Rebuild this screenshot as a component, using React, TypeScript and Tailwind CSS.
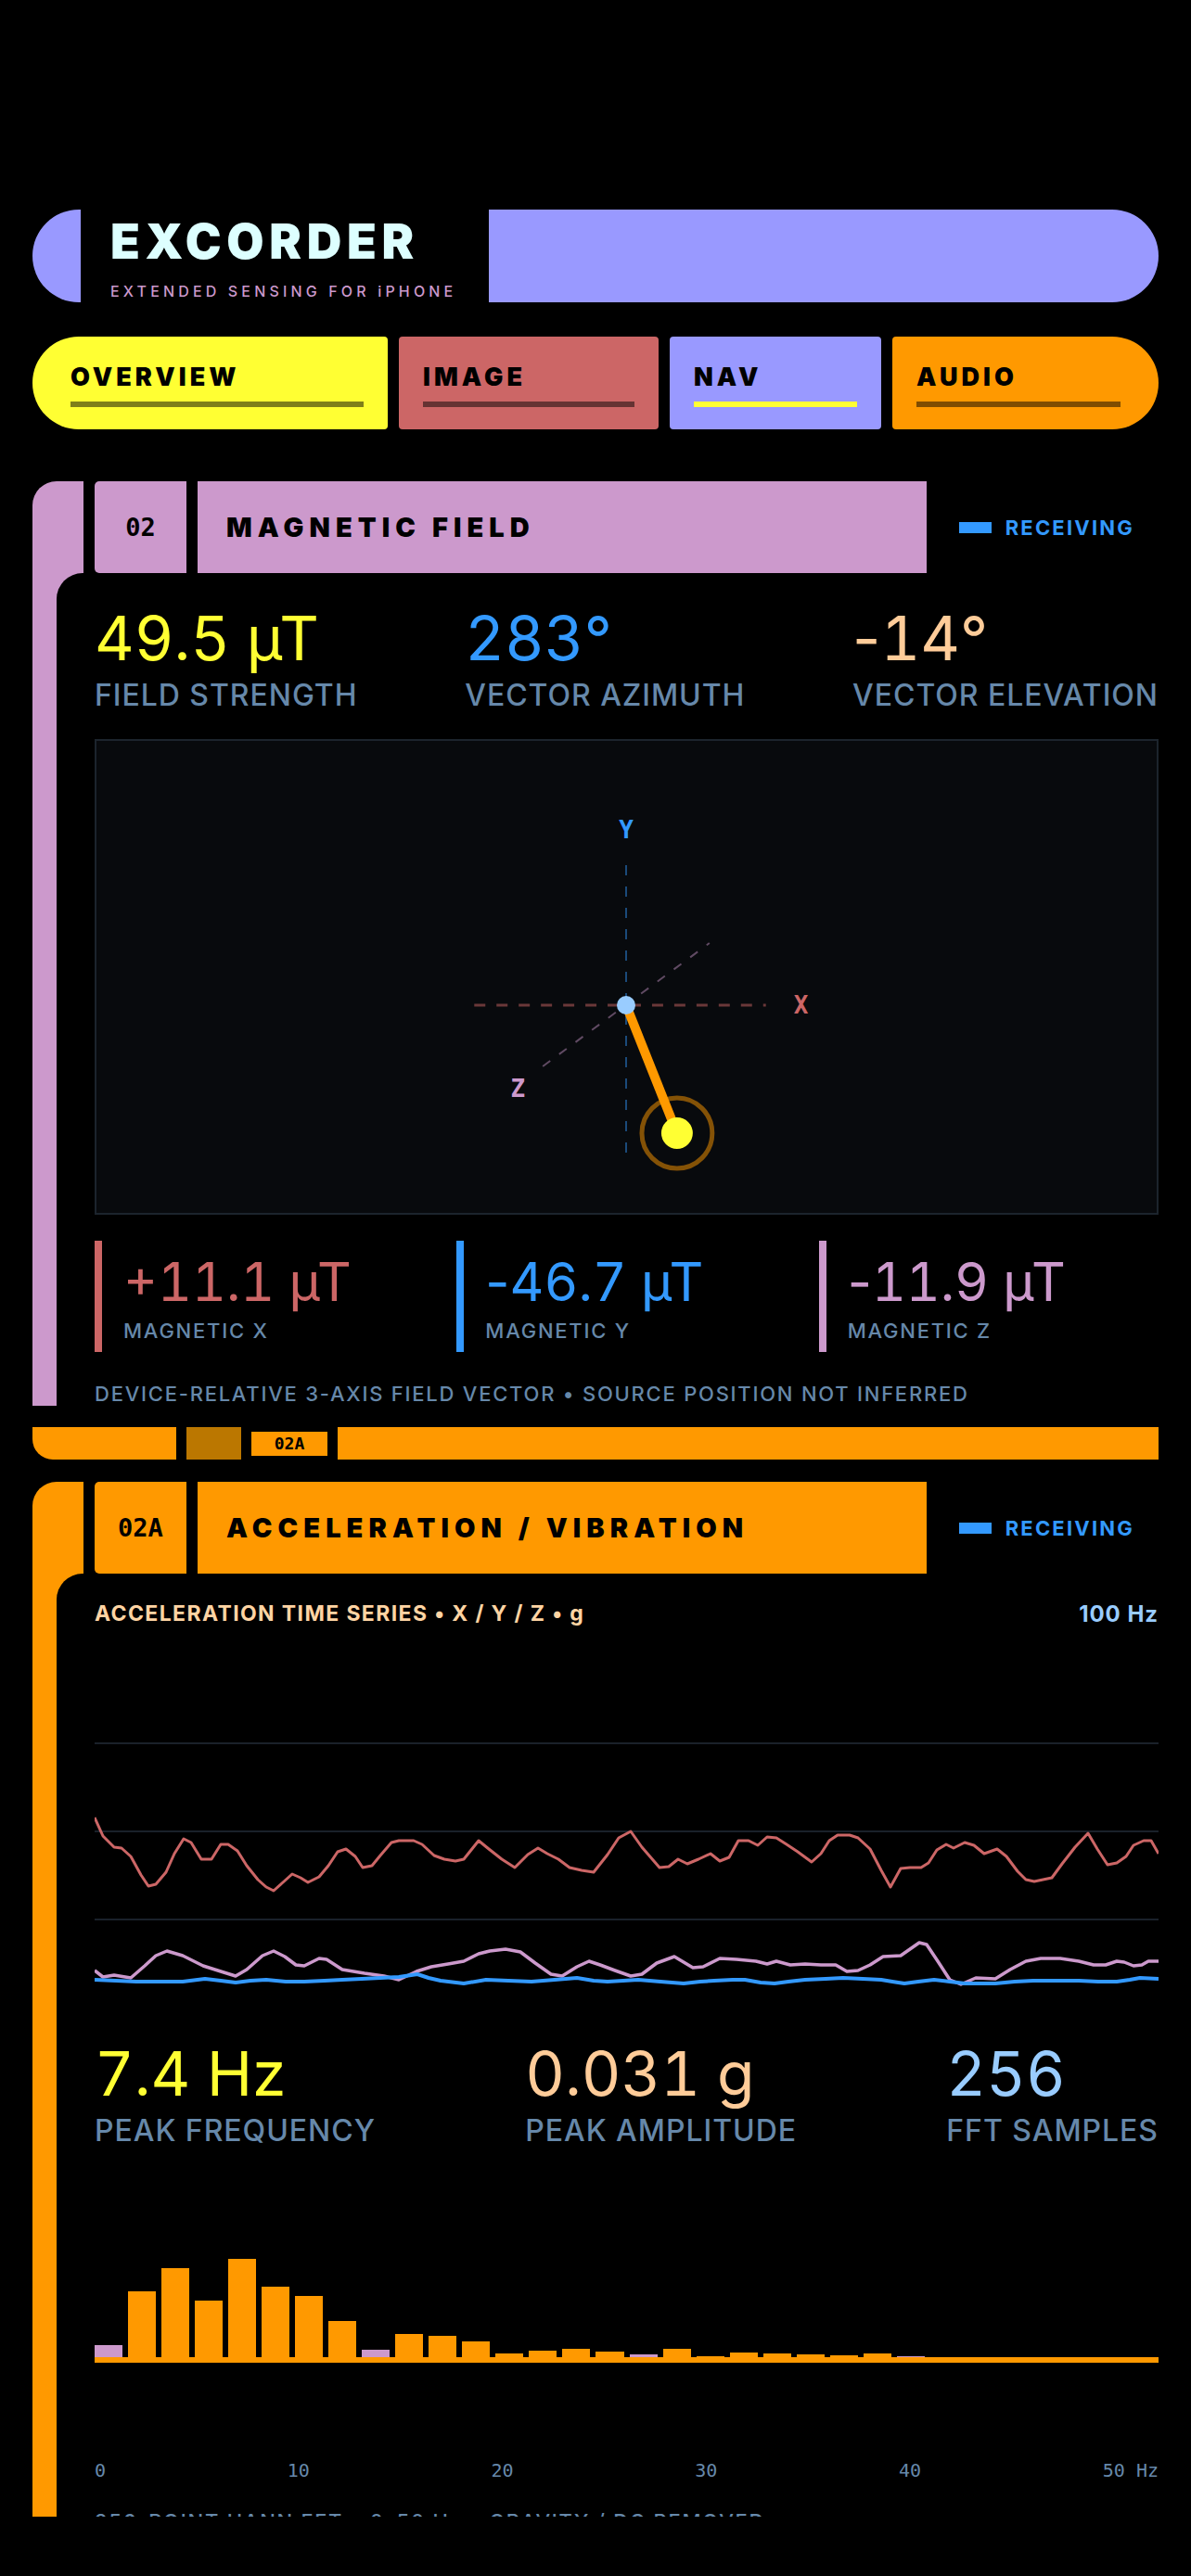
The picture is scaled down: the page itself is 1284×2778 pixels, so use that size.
import React from "react";

const RED =
  "102,1958 111,1978 123,1990 131,1991 141,2000 152,2020 160,2032 168,2030 179,2017 188,1997 198,1981 206,1985 217,2003 228,2003 238,1987 246,1987 256,1994 266,2010 278,2025 287,2033 295,2037 305,2028 315,2019 324,2023 332,2028 344,2022 354,2010 364,1995 373,1992 383,2000 391,2012 401,2010 410,1999 422,1985 430,1983 446,1983 455,1987 468,1999 479,2003 491,2005 500,2003 516,1983 527,1992 541,2003 555,2012 569,1998 580,1991 590,1997 602,2003 614,2012 627,2015 640,2017 655,1998 667,1980 680,1973 692,1990 711,2012 721,2011 731,2003 741,2008 753,2003 766,1997 776,2005 786,2001 796,1983 807,1983 817,1988 827,1979 837,1980 848,1987 860,1995 875,2006 885,1997 894,1983 903,1977 916,1977 925,1980 938,1992 950,2015 960,2033 971,2013 981,2012 993,2012 1001,2007 1010,1993 1020,1987 1028,1991 1040,1985 1050,1988 1061,1997 1075,1992 1085,2000 1097,2016 1106,2025 1115,2027 1134,2023 1145,2008 1159,1990 1173,1975 1183,1992 1194,2009 1204,2007 1214,2000 1222,1988 1233,1983 1241,1983 1249,1997";

const PINK =
  "102,2123 111,2130 123,2128 141,2131 156,2118 168,2107 180,2102 197,2107 219,2118 238,2124 254,2129 266,2122 283,2107 295,2102 307,2108 319,2117 328,2118 344,2110 352,2111 369,2122 393,2126 414,2129 430,2133 449,2124 465,2119 483,2116 500,2113 516,2105 528,2102 545,2100 561,2103 577,2115 594,2127 606,2129 622,2119 635,2113 647,2117 663,2123 680,2129 692,2127 708,2115 727,2108 747,2120 758,2119 776,2110 794,2111 815,2113 827,2116 837,2113 852,2117 868,2116 885,2117 901,2117 913,2124 925,2123 938,2117 952,2108 971,2107 991,2093 999,2095 1011,2113 1024,2133 1036,2138 1052,2131 1073,2132 1089,2122 1106,2113 1122,2110 1143,2110 1163,2113 1179,2117 1192,2117 1204,2113 1212,2114 1222,2118 1231,2117 1238,2113 1249,2113";

const BLUE =
  "102,2133 125,2134 147,2135 172,2135 197,2135 221,2132 238,2134 254,2136 270,2134 287,2133 308,2135 328,2135 350,2134 369,2133 390,2132 410,2131 430,2130 450,2127 462,2131 475,2134 500,2137 524,2133 548,2134 573,2135 598,2133 622,2131 640,2134 655,2135 672,2134 688,2133 712,2135 737,2137 755,2135 770,2134 790,2133 803,2133 820,2136 835,2137 850,2135 868,2133 890,2132 909,2131 930,2132 950,2133 962,2135 975,2137 990,2135 1007,2133 1024,2135 1040,2137 1056,2137 1073,2137 1094,2135 1114,2134 1140,2134 1163,2134 1184,2135 1204,2135 1218,2133 1229,2131 1249,2132";

const FFT = [13, 71, 96, 61, 106, 76, 66, 39, 8, 25, 23, 17, 4, 7, 9, 6, 3, 9, 1, 5, 4, 3, 2, 4, 1, 0, 0, 0, 0, 0, 0, 0];

// keeps the minus sign narrow while digits stay tabular
function Num({ value }: { value: string }) {
  if (value.startsWith("-")) {
    return (
      <>
        <span className="normal-nums">-</span>
        {value.slice(1)}
      </>
    );
  }
  return <>{value}</>;
}

function Stat({ value, label, color }: { value: string; label: string; color: string }) {
  return (
    <div className="flex flex-col">
      <span className={`text-[66px] font-normal leading-none tabular-nums ${color}`}>
        <Num value={value} />
      </span>
      <span className="mt-[13px] text-[32px] font-medium leading-none tracking-[0.03em] text-[#6688aa]">{label}</span>
    </div>
  );
}

function Axis({ value, label, text, border }: { value: string; label: string; text: string; border: string }) {
  return (
    <div className={`flex flex-col border-l-[8px] pl-[23px] pt-[16px] pb-[12px] ${border}`}>
      <span className={`text-[57px] font-normal leading-none tabular-nums ${text}`}>
        <Num value={value} />
      </span>
      <span className="mt-[13px] text-[22px] font-medium leading-none tracking-[0.08em] text-[#6688aa]">{label}</span>
    </div>
  );
}

function Section({ id, title, bg, children }: { id: string; title: string; bg: string; children: React.ReactNode }) {
  return (
    <section className="flex flex-col">
      <div className="flex h-[99px]">
        <div className={`w-[55px] rounded-tl-[26px] ${bg}`} />
        <div className={`ml-[12px] flex w-[99px] items-center justify-center rounded-l-[5px] ${bg}`}>
          <span className="font-['DejaVu_Sans_Mono',monospace] text-[27px] font-bold leading-none text-black">{id}</span>
        </div>
        <div className={`ml-[12px] flex w-[786px] items-center pl-[31px] ${bg}`}>
          <span className="text-[29px] font-black leading-none tracking-[0.21em] text-black">{title}</span>
        </div>
        <div className="flex flex-1 items-center justify-end gap-[15px] pr-[26px]">
          <span className="h-[12px] w-[35px] bg-[#3399ff]" />
          <span className="text-[22px] font-bold leading-none tracking-[0.1em] text-[#3399ff]">RECEIVING</span>
        </div>
      </div>
      <div className={bg}>
        <div className="ml-[26px] rounded-tl-[28px] bg-black pl-[41px]">{children}</div>
      </div>
    </section>
  );
}

function FieldDiagram() {
  return (
    <div className="mt-[31px] h-[513px] border-2 border-[#1c242d] bg-[#080a0d]">
      <svg viewBox="104 799 1145 509" preserveAspectRatio="none" className="h-full w-full">
        <line x1="676" y1="933" x2="676" y2="1248" stroke="#3399ff" strokeOpacity="0.45" strokeWidth="2" strokeDasharray="11 12" />
        <line x1="512" y1="1084" x2="827" y2="1084" stroke="#cc6666" strokeOpacity="0.5" strokeWidth="3" strokeDasharray="12 12" />
        <line x1="586" y1="1150" x2="766" y2="1017" stroke="#cc99cc" strokeOpacity="0.45" strokeWidth="2" strokeDasharray="10 12" />
        <text x="676" y="904" textAnchor="middle" fill="#3399ff" fontSize="26" fontWeight="600" fontFamily="DejaVu Sans Mono, monospace">Y</text>
        <text x="865" y="1093" textAnchor="middle" fill="#cc6666" fontSize="26" fontWeight="600" fontFamily="DejaVu Sans Mono, monospace">X</text>
        <text x="559" y="1183" textAnchor="middle" fill="#cc99cc" fontSize="26" fontWeight="600" fontFamily="DejaVu Sans Mono, monospace">Z</text>
        <circle cx="731" cy="1222" r="38" fill="none" stroke="#ff9900" strokeOpacity="0.5" strokeWidth="5" />
        <line x1="676" y1="1084" x2="731" y2="1222" stroke="#ff9900" strokeWidth="10" />
        <circle cx="731" cy="1222" r="17" fill="#ffff33" />
        <circle cx="676" cy="1084" r="10" fill="#99ccff" />
      </svg>
    </div>
  );
}

function TimeSeries() {
  return (
    <div className="mt-[32px] h-[380px]">
      <svg viewBox="102 1783 1147 380" preserveAspectRatio="none" className="h-full w-full">
        <line x1="102" y1="1878" x2="1249" y2="1878" stroke="#1a212a" strokeWidth="2" />
        <line x1="102" y1="1973" x2="1249" y2="1973" stroke="#1a212a" strokeWidth="2" />
        <line x1="102" y1="2068" x2="1249" y2="2068" stroke="#1a212a" strokeWidth="2" />
        <polyline points={RED} fill="none" stroke="#cc6666" strokeWidth="3" strokeLinejoin="round" />
        <polyline points={PINK} fill="none" stroke="#cc99cc" strokeWidth="3.5" strokeLinejoin="round" />
        <polyline points={BLUE} fill="none" stroke="#3399ff" strokeWidth="4" strokeLinejoin="round" />
      </svg>
    </div>
  );
}

export default function App() {
  return (
    <div className="h-[2778px] w-full bg-black font-['Inter',sans-serif]">
      <main className="h-[2714px] overflow-hidden px-[35px] pt-[226px]">
        {/* Title bar */}
        <header className="flex h-[100px]">
          <div className="w-[52px] rounded-l-full bg-[#9999ff]" />
          <div className="flex w-[440px] flex-col pl-[32px] pt-[9px]">
            <span className="text-[52px] font-black leading-none tracking-[0.11em] text-[#ddffff]">EXCORDER</span>
            <span className="mt-[19px] text-[16px] font-medium leading-none tracking-[0.26em] text-[#cc99cc]">EXTENDED SENSING FOR iPHONE</span>
          </div>
          <div className="flex-1 rounded-r-full bg-[#9999ff]" />
        </header>

        {/* Tabs */}
        <nav className="mt-[37px] flex h-[100px] gap-[12px]">
          <div className="flex w-[383px] flex-col rounded-l-[50px] rounded-r-[4px] bg-[#ffff33] pl-[41px] pr-[26px] pt-[30px]">
            <span className="text-[27px] font-black leading-none tracking-[0.15em] text-black">OVERVIEW</span>
            <span className="mt-[13px] h-[6px] bg-black/50" />
          </div>
          <div className="flex w-[280px] flex-col rounded-[4px] bg-[#cc6666] px-[26px] pt-[30px]">
            <span className="text-[27px] font-black leading-none tracking-[0.15em] text-black">IMAGE</span>
            <span className="mt-[13px] h-[6px] bg-black/50" />
          </div>
          <div className="flex w-[228px] flex-col rounded-[4px] bg-[#9999ff] px-[26px] pt-[30px]">
            <span className="text-[27px] font-black leading-none tracking-[0.15em] text-black">NAV</span>
            <span className="mt-[13px] h-[6px] bg-[#ffff33]" />
          </div>
          <div className="flex flex-1 flex-col rounded-l-[4px] rounded-r-[50px] bg-[#ff9900] pl-[26px] pr-[41px] pt-[30px]">
            <span className="text-[27px] font-black leading-none tracking-[0.15em] text-black">AUDIO</span>
            <span className="mt-[13px] h-[6px] bg-black/50" />
          </div>
        </nav>

        {/* Magnetic field */}
        <div className="mt-[56px]">
          <Section id="02" title="MAGNETIC FIELD" bg="bg-[#cc99cc]">
            <div className="flex justify-between pt-[37px]">
              <Stat value="49.5 µT" label="FIELD STRENGTH" color="text-[#ffff33]" />
              <Stat value="283°" label="VECTOR AZIMUTH" color="text-[#3399ff]" />
              <Stat value="-14°" label="VECTOR ELEVATION" color="text-[#ffcc99]" />
            </div>
            <FieldDiagram />
            <div className="mt-[28px] grid grid-cols-3 gap-6">
              <Axis value="+11.1 µT" label="MAGNETIC X" text="text-[#cc6666]" border="border-[#cc6666]" />
              <Axis value="-46.7 µT" label="MAGNETIC Y" text="text-[#3399ff]" border="border-[#3399ff]" />
              <Axis value="-11.9 µT" label="MAGNETIC Z" text="text-[#cc99cc]" border="border-[#cc99cc]" />
            </div>
            <p className="mt-[34px] pb-[2px] text-[22px] font-medium leading-none tracking-[0.08em] text-[#6688aa]">
              DEVICE-RELATIVE 3-AXIS FIELD VECTOR • SOURCE POSITION NOT INFERRED
            </p>
          </Section>
        </div>

        {/* Divider band */}
        <div className="mt-[23px] flex h-[35px] gap-[11px]">
          <div className="w-[155px] rounded-bl-[22px] bg-[#ff9900]" />
          <div className="w-[59px] bg-[#bb7700]" />
          <div className="flex h-[26px] w-[82px] items-center justify-center self-center bg-[#ff9900]">
            <span className="font-['DejaVu_Sans_Mono',monospace] text-[18px] font-bold leading-none text-black">02A</span>
          </div>
          <div className="flex-1 bg-[#ff9900]" />
        </div>

        {/* Acceleration */}
        <div className="mt-[24px]">
          <Section id="02A" title="ACCELERATION / VIBRATION" bg="bg-[#ff9900]">
            <div className="flex justify-between pt-[32px]">
              <span className="text-[23px] font-bold leading-none tracking-[0.06em] text-[#ffd4a3]">ACCELERATION TIME SERIES • X / Y / Z • g</span>
              <span className="text-[24px] font-bold leading-none tracking-[0.04em] text-[#99ccff]">100 Hz</span>
            </div>
            <TimeSeries />
            <div className="mt-[38px] flex justify-between">
              <Stat value="7.4 Hz" label="PEAK FREQUENCY" color="text-[#ffff33]" />
              <Stat value="0.031 g" label="PEAK AMPLITUDE" color="text-[#ffcc99]" />
              <Stat value="256" label="FFT SAMPLES" color="text-[#99ccff]" />
            </div>
            <div className="mt-[54px] flex flex-col">
              <div className="flex h-[174px] items-end gap-[6px]">
                {FFT.map((h, i) => (
                  <div
                    key={i}
                    className={i % 8 === 0 ? "flex-1 bg-[#cc99cc]" : "flex-1 bg-[#ff9900]"}
                    style={{ height: h }}
                  />
                ))}
              </div>
              <div className="h-[6px] bg-[#ff9900]" />
            </div>
            <div className="mt-[106px] flex justify-between font-['DejaVu_Sans_Mono',monospace] text-[20px] leading-none text-[#6688aa]">
              <span>0</span>
              <span>10</span>
              <span>20</span>
              <span>30</span>
              <span>40</span>
              <span>50 Hz</span>
            </div>
            <p className="mt-[34px] text-[22px] font-medium leading-none tracking-[0.08em] text-[#6688aa]">
              256-POINT HANN FFT • 0–50 Hz • GRAVITY / DC REMOVED
            </p>
          </Section>
        </div>
      </main>
    </div>
  );
}
